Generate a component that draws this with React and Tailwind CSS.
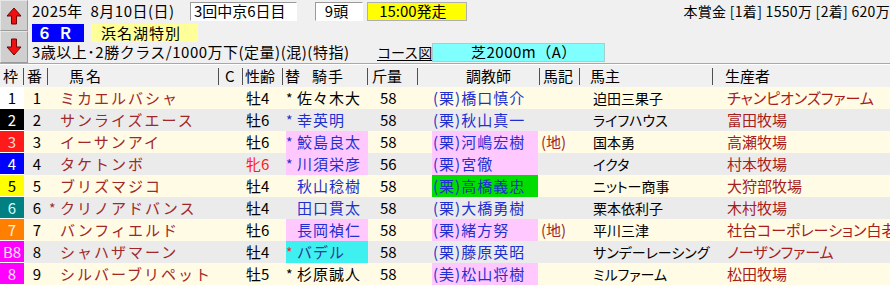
import React from "react";

const rows = [
  { waku: "1", wBg: "bg-white", wText: "text-black", no: "1", mark: "", name: "ミカエルバシャ", sex: "牡4", kMark: "*", kMarkRed: false, jockey: "佐々木大", jColor: "text-black", jBg: "", kin: "58", trainer: "(栗)橋口慎介", tBg: "", ki: "", owner: "迫田三果子", breeder: "チャンピオンズファーム" },
  { waku: "2", wBg: "bg-black", wText: "text-white", no: "2", mark: "", name: "サンライズエース", sex: "牡6", kMark: "*", jockey: "幸英明", jColor: "text-[#1f2fd0]", jBg: "", kin: "58", trainer: "(栗)秋山真一", tBg: "", ki: "", owner: "ライフハウス", breeder: "富田牧場" },
  { waku: "3", wBg: "bg-[#ff1a1a]", wText: "text-[#ffd8d8]", no: "3", mark: "", name: "イーサンアイ", sex: "牡6", kMark: "*", jockey: "鮫島良太", jColor: "text-[#1f2fd0]", jBg: "bg-[#ffc8ff]", kin: "58", trainer: "(栗)河嶋宏樹", tBg: "bg-[#ffc8ff]", ki: "(地)", owner: "国本勇", breeder: "高瀬牧場" },
  { waku: "4", wBg: "bg-[#0000ff]", wText: "text-white", no: "4", mark: "", name: "タケトンボ", sex: "牝6", sexRed: true, kMark: "*", jockey: "川須栄彦", jColor: "text-[#1f2fd0]", jBg: "bg-[#ffc8ff]", kin: "56", trainer: "(栗)宮徹", tBg: "bg-[#ffc8ff]", ki: "", owner: "イクタ", breeder: "村本牧場" },
  { waku: "5", wBg: "bg-[#ffff00]", wText: "text-black", no: "5", mark: "", name: "ブリズマジコ", sex: "牡4", kMark: "", jockey: "秋山稔樹", jColor: "text-[#1f2fd0]", jBg: "", kin: "58", trainer: "(栗)高橋義忠", tBg: "bg-[#00dd00]", ki: "", owner: "ニットー商事", breeder: "大狩部牧場" },
  { waku: "6", wBg: "bg-[#008080]", wText: "text-[#d8ffff]", no: "6", mark: "*", name: "クリノアドバンス", sex: "牡4", kMark: "", jockey: "田口貫太", jColor: "text-[#1f2fd0]", jBg: "", kin: "58", trainer: "(栗)大橋勇樹", tBg: "", ki: "", owner: "栗本依利子", breeder: "木村牧場" },
  { waku: "7", wBg: "bg-[#ff8000]", wText: "text-[#fff0e0]", no: "7", mark: "", name: "バンフィエルド", sex: "牡6", kMark: "", jockey: "長岡禎仁", jColor: "text-[#1f2fd0]", jBg: "bg-[#ffc8ff]", kin: "58", trainer: "(栗)緒方努", tBg: "bg-[#ffc8ff]", ki: "(地)", owner: "平川三津", breeder: "社台コーポレーション白老" },
  { waku: "B8", wBg: "bg-[#ff00ff]", wText: "text-[#ffe0ff]", no: "8", mark: "", name: "シャハザマーン", sex: "牡4", kMark: "*", kMarkRed: true, jockey: "バデル", jColor: "text-[#2a3a90]", jBg: "bg-[#3ff0f0]", kin: "58", trainer: "(栗)藤原英昭", tBg: "", ki: "", owner: "サンデーレーシング", breeder: "ノーザンファーム" },
  { waku: "8", wBg: "bg-[#ff00ff]", wText: "text-[#ffe0ff]", no: "9", mark: "", name: "シルバーブリペット", sex: "牡5", kMark: "*", jockey: "杉原誠人", jColor: "text-black", jBg: "", kin: "58", trainer: "(美)松山将樹", tBg: "bg-[#ffc8ff]", ki: "", owner: "ミルファーム", breeder: "松田牧場" },
];

const Arrow = ({ down }) => (
  <svg width="16" height="18" viewBox="0 0 16 18" className={down ? "rotate-180" : ""}>
    <path d="M8 1 L15 9 L10.5 9 L10.5 17 L5.5 17 L5.5 9 L1 9 Z" fill="#ee1111" stroke="#7a0000" strokeWidth="1" />
  </svg>
);

const Divider = () => <div className="ml-auto h-[17px] w-px bg-[#505050]" />;

const App = () => {
  return (
    <div className="h-[285px] w-[890px] overflow-hidden bg-[#f0f0f0] font-['Noto_Sans_CJK_JP',sans-serif] text-black">
      {/* race info */}
      <div className="flex h-[63px]">
        <div className="flex w-[28px] flex-col">
          <div className="flex h-[31px] items-center justify-center border border-[#e6e6e6] border-b-[#9a9a9a] border-r-[#9a9a9a] bg-[#cfcfcf]">
            <Arrow />
          </div>
          <div className="flex h-[32px] items-center justify-center border border-[#e6e6e6] border-b-[#9a9a9a] border-r-[#9a9a9a] bg-[#cfcfcf]">
            <Arrow down />
          </div>
        </div>

        <div className="flex-1 overflow-hidden pl-[4px] pt-[1px]">
          <div className="flex h-[20px] items-center whitespace-nowrap text-[15px] leading-[18px]">
            <span className="w-[161px] tracking-[0.5px]">2025年&nbsp;&nbsp;8月10日(日)</span>
            <div className="flex h-[19px] w-[109px] items-center border border-[#9a9a9a] border-b-white border-r-white bg-white pl-[3px]">3回中京6日目</div>
            <div className="ml-[18px] flex h-[19px] w-[49px] items-center border border-[#9a9a9a] border-b-white border-r-white bg-white pl-[9px]">9頭</div>
            <div className="ml-[4px] flex h-[19px] w-[102px] items-center border border-[#b0b0b0] bg-[#ffff00] pl-[11px]">15:00発走</div>
            <span className="ml-[216px] text-[14px] tracking-[0.3px]">本賞金 [1着] 1550万 [2着] 620万</span>
          </div>

          <div className="mt-[2px] flex h-[19px] items-center text-[15px] leading-[18px]">
            <div className="flex h-[18px] w-[52px] items-center justify-center bg-[#0000ff] font-bold tracking-[6px] text-white">６Ｒ</div>
            <div className="ml-[7px] flex h-[18px] w-[107px] items-center bg-[#ffff99] pl-[10px] tracking-[1px]">浜名湖特別</div>
          </div>

          <div className="flex h-[20px] items-center whitespace-nowrap text-[15px] leading-[18px]">
            <span className="w-[345px] tracking-[0.5px]">3歳以上･2勝クラス/1000万下(定量)(混)(特指)</span>
            <span className="w-[49px] text-[14px] underline underline-offset-2">コース図</span>
            <div className="ml-[6px] flex h-[19px] w-[173px] items-center border border-[#a0d0d0] bg-[#80ffff] pl-[38px] tracking-[0.5px]">芝2000m（A）</div>
          </div>
        </div>
      </div>

      <div className="h-[2px] border-t border-[#a8a8a8] bg-white" />

      {/* header */}
      <div className="flex h-[22px] items-center whitespace-nowrap text-[15px] leading-[18px]">
        <div className="flex w-[24px] items-center pl-[3px]">枠<Divider /></div>
        <div className="flex w-[24px] items-center pl-[3px]">番<Divider /></div>
        <div className="flex w-[171px] items-center pl-[21px] tracking-[2px]">馬名<Divider /></div>
        <div className="flex w-[24px] items-center pl-[6px]">C<Divider /></div>
        <div className="flex w-[40px] items-center pl-[2px]">性齢<Divider /></div>
        <div className="flex w-[85px] items-center pl-[2px]">替<span className="ml-[12px] tracking-[1px]">騎手</span><Divider /></div>
        <div className="flex w-[50px] items-center pl-[4px]">斤量<Divider /></div>
        <div className="flex w-[122px] items-center pl-[48px]">調教師<Divider /></div>
        <div className="flex w-[40px] items-center pl-[3px]">馬記<Divider /></div>
        <div className="flex w-[133px] items-center pl-[10px]">馬主<Divider /></div>
        <div className="flex w-[177px] items-center pl-[12px]">生産者</div>
      </div>

      {/* entries */}
      {rows.map((r, i) => (
        <div
          key={r.no}
          className={`flex h-[22px] items-stretch whitespace-nowrap text-[15px] leading-[18px] ${i % 2 === 0 ? "bg-[#fffbe4]" : "bg-[#ebebeb]"}`}
        >
          <div className={`flex w-[24px] items-center justify-center border-b border-white ${r.wBg} ${r.wText}`}>{r.waku}</div>
          <div className="flex w-[24px] items-center justify-end pr-[7px]">{r.no}</div>
          <div className="flex w-[171px] items-center text-[#a02828]">
            <span className="w-[12px] pl-[1px] text-[14px]">{r.mark}</span>
            <span className="tracking-[2px]">{r.name}</span>
          </div>
          <div className="w-[24px]" />
          <div className={`flex w-[40px] items-center pl-[3px] ${r.sexRed ? "text-[#ff1a1a]" : ""}`}>{r.sex}</div>
          <div className="flex w-[85px] items-stretch pl-[3px]">
            <div className={`flex flex-1 items-center overflow-hidden ${r.jBg} ${r.jColor}`}>
              <span className={`w-[11px] text-[14px] ${r.kMarkRed ? "text-[#ff2020]" : ""}`}>{r.kMark}</span>
              <span className="tracking-[1px]">{r.jockey}</span>
            </div>
          </div>
          <div className="flex w-[50px] items-center pl-[12px]">{r.kin}</div>
          <div className="flex w-[122px] items-stretch pl-[14px] pr-[2px]">
            <div className={`flex flex-1 items-center pl-[1px] tracking-[1px] text-[#1f2fd0] ${r.tBg}`}>{r.trainer}</div>
          </div>
          <div className="flex w-[40px] items-center pl-[1px] text-[#a02828]">{r.ki}</div>
          <div className="flex w-[133px] items-center pl-[13px] text-[14px] [font-feature-settings:'palt']">{r.owner}</div>
          <div className="flex w-[177px] items-center overflow-hidden pl-[14px] text-[15px] text-[#a81c1c] [font-feature-settings:'palt']">{r.breeder}</div>
        </div>
      ))}
    </div>
  );
};

export default App;
